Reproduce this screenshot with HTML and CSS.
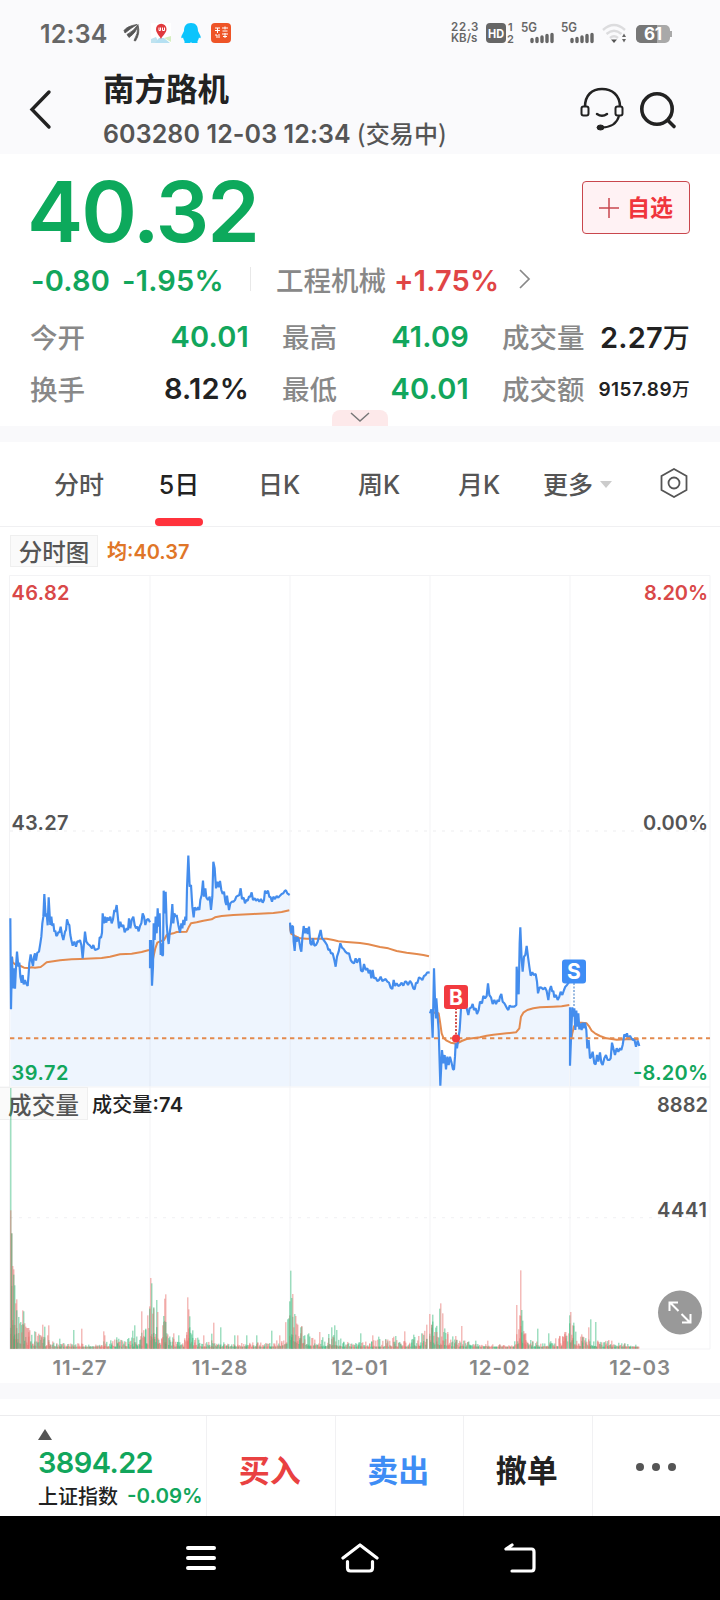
FILE: index.html
```html
<!DOCTYPE html>
<html lang="zh-CN">
<head>
    <meta charset="UTF-8">
    <meta name="viewport" content="width=device-width, initial-scale=1.0">
    <title>南方路机</title>
    <link rel="stylesheet" href="styles.css">
</head>
<body>
    <div class="status-bar">
        <span class="clock">12:34</span>
        <svg class="app-icons" width="110" height="22" viewBox="0 0 110 22">
            <path d="M1 8.500Q4 4 14 2.500Q8 6 2 11ZM4 12.500Q11 9 15 2.500Q14 10 6 15.500ZM11 18.500Q15 12 15 3.500Q17.500 11 12.500 19Z" fill="#555" stroke="#555" stroke-width=".8"/>
            <rect x="28" y="1" width="20" height="20" fill="#fff"/>
            <path d="M28 17l5-2 3 6h-8z" fill="#bfe3f0"/>
            <path d="M36 16h5l6 5h-15z" fill="#b5e0f2"/>
            <path d="M41 16l7-2v6z" fill="#d5eec0"/>
            <path d="M38 17C36 13 33 11 33 7a5 5 0 0 1 10.500 0c0 4-3.500 6-5.500 10z" fill="#e03a3e"/>
            <path d="M36 5.500v3h1.500v-3M39.500 5.500v3h2v-3" fill="none" stroke="#fff" stroke-width="1"/>
            <path d="M68 1c5 0 7 3 7 8l2.500 5c.500 2 0 3-1.500 1.500-.500 2-1 3-1.500 3.500v2h-5.500l-1-.700-1 .700h-5.500v-2c-.500-.500-1-1.500-1.500-3.500-1.500 1.500-2 .500-1.500-1.500L61 9c0-5 2-8 7-8z" fill="#0cc4fc"/>
            <rect x="88" y="1" width="20" height="20" rx="4" fill="#ee5427"/>
            <path d="M92 6h5M94.500 6v5M92 8.500h5M99 6h6M102 4.500v3M99.500 9h5M92 13h2v3M96 12v4M99 12h6M102 11v5M100 14.500h4" stroke="#fff" stroke-width="1" fill="none"/>
        </svg>
        <div class="status-right">
            <div class="net-speed"><span>22.3</span><span>KB/s</span></div>
            <svg width="226" height="24" viewBox="0 0 226 24">
                <rect x="0" y="2" width="20" height="20" rx="4" fill="#666"/>
                <text x="2" y="17" class="st-hd" textLength="16" lengthAdjust="spacingAndGlyphs">HD</text>
                <text x="22" y="10" class="st-sm">1</text>
                <text x="21" y="22" class="st-sm">2</text>
                <text x="35" y="11" class="st-5g" textLength="16" lengthAdjust="spacingAndGlyphs">5G</text>
                <path d="M46 17.500v2M51 16.500v3M56 15v4.500M61 13.500v6M66 12.500v7" class="bars" transform="translate(0 1)"/>
                <text x="75" y="11" class="st-5g" textLength="16" lengthAdjust="spacingAndGlyphs">5G</text>
                <path d="M86 17.500v2M91 16.500v3M96 15v4.500M101 13.500v6M106 12.500v7" class="bars" transform="translate(0 1)"/>
                <path d="M117 9Q128 -1 139 9M120.500 13Q128 6.500 135.500 13M124 17Q128 13.500 132 17" fill="none" stroke="#dcdcde" stroke-width="2.400"/>
                <path d="M125 18.500h6L128 22z" fill="#555"/>
                <path d="M136 16l2-3.500 2 3.500zM136 18l2 3.500 2-3.500z" fill="#666"/>
                <rect x="150" y="4" width="34" height="18" rx="5" fill="#a9a9a9"/>
                <path d="M155 4h16v18h-16a5 5 0 0 1-5-5v-8a5 5 0 0 1 5-5z" fill="#777"/>
                <rect x="184" y="10" width="2" height="6" fill="#a9a9a9"/>
                <text x="158" y="19" class="st-bat" textLength="18">61</text>
            </svg>
        </div>
    </div>

    <div class="header">
        <svg class="back" width="24" height="42" viewBox="0 0 24 42"><path d="M20 4L3 21.500L20 39" fill="none" stroke="#222" stroke-width="3.400" stroke-linecap="round"/></svg>
        <div class="stock">
            <div class="stock-name">南方路机</div>
            <div class="stock-sub">603280 12-03 12:34 <span class="cn">(交易中)</span></div>
        </div>
        <svg class="service" width="44" height="46" viewBox="0 0 44 46" fill="none" stroke="#222">
            <path d="M5 21C5 9 12 3 22 3s18 6 18 18" stroke-width="2.500"/>
            <rect x="1.500" y="20.500" width="7" height="9" rx="2" stroke-width="2"/>
            <rect x="35.500" y="20.500" width="7" height="9" rx="2" stroke-width="2"/>
            <path d="M17 28q5 3.500 10 0" stroke-width="2.500" stroke-linecap="round"/>
            <path d="M39 30q-3 11-17 11.500" stroke-width="2.200"/>
            <ellipse cx="20.500" cy="41.500" rx="3.500" ry="2.500" fill="#222"/>
        </svg>
        <svg class="search" width="38" height="40" viewBox="0 0 38 40" fill="none" stroke="#222" stroke-width="3.600">
            <circle cx="18" cy="19" r="15.200"/>
            <path d="M29 30.500l6 6" stroke-linecap="round"/>
        </svg>
    </div>

    <div class="quote">
        <div class="price-row">
            <div class="price">40.32</div>
            <div class="add-btn">
                <svg width="20" height="20" viewBox="0 0 20 20"><path d="M10 0v20M0 10h20" stroke="#c9474d" stroke-width="1.500"/></svg>
                自选
            </div>
        </div>
        <div class="change-row">
            <span class="chg green">-0.80</span>
            <span class="pct green">-1.95%</span>
            <i class="sep"></i>
            <span class="label">工程机械</span>
            <span class="sector red">+1.75%</span>
            <svg width="12" height="20" viewBox="0 0 12 20"><path d="M1 1l9 9-9 9" fill="none" stroke="#888" stroke-width="1.700"/></svg>
        </div>
        <div class="stats">
            <div class="stat"><span class="label">今开</span><span class="val green">40.01</span></div>
            <div class="stat"><span class="label">最高</span><span class="val green">41.09</span></div>
            <div class="stat"><span class="label">成交量</span><span class="val">2.27<b class="cn">万</b></span></div>
            <div class="stat"><span class="label">换手</span><span class="val">8.12%</span></div>
            <div class="stat"><span class="label">最低</span><span class="val green">40.01</span></div>
            <div class="stat"><span class="label">成交额</span><span class="val small">9157.89<b class="cn">万</b></span></div>
        </div>
        <div class="handle">
            <svg width="20" height="11" viewBox="0 0 20 11"><path d="M1 1l9 8 9-8" fill="none" stroke="#777" stroke-width="1.500"/></svg>
        </div>
    </div>

    <div class="tabs">
        <div class="tab">分时</div>
        <div class="tab active">5日</div>
        <div class="tab">日K</div>
        <div class="tab">周K</div>
        <div class="tab">月K</div>
        <div class="tab more">更多<i class="caret"></i></div>
        <svg class="hex" width="28" height="30" viewBox="0 0 28 30" fill="none" stroke="#555" stroke-width="1.800">
            <path d="M14 1L26.500 8v14L14 29 1.500 22V8z"/>
            <circle cx="14" cy="15" r="5.500"/>
        </svg>
    </div>

    <div class="legend">
        <span class="legend-box">分时图</span>
        <span class="avg">均:40.37</span>
    </div>

    <svg class="chart" width="720" height="776" viewBox="0 0 720 776">
        <path class="grid" d="M9.500 .500H710V774H9.500ZM0 512H710M150 0V774M290 0V774M430 0V774M570 0V774"/>
        <path class="grid dash" d="M10 256H710"/>
        <path class="grid dash" d="M10 642.700H710"/>

        <rect class="label-box" x="-1" y="512.500" width="88.500" height="32"/>
        <text class="c-name" x="8" y="538.500" textLength="71">成交量</text>
        <text class="c-vol" x="92" y="537" textLength="91"><tspan class="cn">成交量</tspan>:74</text>

        <g id="volume" transform="scale(.33333)"></g>

        <!-- price data is kept at 1/3 px resolution, one group per session -->
        <g transform="scale(.33333)">
            <g id="prices"></g>
            <path class="last" d="M30 1390H2130"/>
        </g>

        <g class="marks">
            <path d="M456 433V463" stroke="#c9302c" stroke-width="1.700" stroke-dasharray="2 1.500"/>
            <circle cx="456" cy="463.500" r="4" fill="#f23a3f"/>
            <rect x="444" y="410" width="24" height="24" rx="3" fill="#f23a3f"/>
            <text class="mark" x="456" y="429.500">B</text>
            <path d="M574 408V431" stroke="#8ab0dc" stroke-width="1.700" stroke-dasharray="2 1.500"/>
            <rect x="562" y="384.500" width="24" height="24" rx="3" fill="#3e8df5"/>
            <text class="mark" x="574" y="404">S</text>
        </g>

        <text class="axis red" x="11.500" y="24.500" textLength="58">46.82</text>
        <text class="axis red" x="644" y="24.500" textLength="64">8.20%</text>
        <text class="axis" x="11.500" y="254.500" textLength="57">43.27</text>
        <text class="axis" x="643" y="254.500" textLength="65">0.00%</text>
        <text class="axis green" x="11.500" y="504.500" textLength="57">39.72</text>
        <text class="axis green" x="633" y="504.500" textLength="75">-8.20%</text>
        <text class="axis" x="657" y="536.500" textLength="51">8882</text>
        <text class="axis" x="657" y="641.500" textLength="50">4441</text>

        <circle cx="680" cy="737.500" r="22" fill="#999"/>
        <path d="M678.500 736l-8-8M669.500 736v-8.500h8.500M681.500 739l8 8M690.500 739v8.500h-8.500" fill="none" stroke="#fff" stroke-width="2"/>
    </svg>

    <div class="dates">
        <span>11-27</span><span>11-28</span><span>12-01</span><span>12-02</span><span>12-03</span>
    </div>

    <div class="trade-bar">
        <div class="index">
            <i class="up"></i>
            <div class="index-val green">3894.22</div>
            <div class="index-sub"><span class="cn">上证指数</span><span class="green">-0.09%</span></div>
        </div>
        <div class="act buy">买入</div>
        <div class="act sell">卖出</div>
        <div class="act">撤单</div>
        <div class="act dots"><i></i><i></i><i></i></div>
    </div>

    <div class="nav-bar">
        <svg width="32" height="28" viewBox="0 0 32 28"><path d="M3 4h26M3 14h26M3 24h26" stroke="#fff" stroke-width="4" stroke-linecap="round"/></svg>
        <svg width="40" height="30" viewBox="0 0 40 30" fill="none" stroke="#fff" stroke-width="3.200" stroke-linecap="round" stroke-linejoin="round"><path d="M3 15L20 2 37 15M7.500 18.500v6.500q0 3 3 3h19q3 0 3-3v-6.500"/></svg>
        <svg width="34" height="30" viewBox="0 0 34 30" fill="none" stroke="#fff" stroke-width="3.200" stroke-linecap="round" stroke-linejoin="round"><path d="M9 2L3 6h25.500q2.500 0 2.500 3v16q0 3-2.500 3H9"/></svg>
    </div>

    <script>
        const NS = 'http://www.w3.org/2000/svg';

        const sessions = [
            {
                dx: 0,
                price: '31,355 33,628 36,470 39,565 43,505 45,566 48,500 51,455 55,500 58,488 61,530 65,548 68,525 71,553 75,540 79,552 83,558 86,520 88,490 92,463 96,485 99,498 102,470 105,460 108,482 112,458 117,455 121,430 124,410 127,370 130,350 133,282 137,350 140,340 143,376 146,292 149,345 151,375 154,350 157,378 160,370 163,395 166,392 169,408 172,405 175,396 178,398 182,380 186,405 190,420 195,395 198,390 201,358 205,372 208,375 211,405 214,420 218,437 223,425 228,440 232,424 237,425 240,420 244,435 248,475 252,430 255,395 259,425 264,432 270,437 276,445 280,435 285,450 291,448 296,445 299,412 303,413 306,398 308,340 312,370 315,350 319,368 322,352 326,362 331,350 335,370 339,358 343,330 346,335 350,315 354,355 357,385 361,365 365,380 370,375 374,397 380,385 384,390 387,355 391,385 395,360 400,350 404,375 408,385 412,380 416,394 420,378 424,370 428,340 432,350 436,375 440,360 445,357 450,367',
                avg: '36,470 38,487 45,493 55,495 62,498 72,503 85,504 95,502 105,503 122,501 130,495 140,487 150,485 180,481 215,478 240,477 305,474 330,470 360,463 395,461 425,456 447,450'
            },
            {
                dx: 0,
                price: '450,420 450,505 453,420 456,557 459,500 461,370 464,420 467,350 470,400 473,325 476,380 479,340 482,465 485,430 487,468 489,465 491,272 494,340 497,275 500,370 503,410 506,432 509,400 513,370 517,312 520,370 523,340 527,350 530,345 535,375 540,398 544,370 547,385 550,360 553,375 556,350 559,362 561,265 565,167 569,260 573,255 577,320 581,352 584,322 590,330 594,322 598,330 601,300 605,285 609,242 612,290 616,265 619,292 624,300 629,290 633,330 637,290 640,185 644,205 648,265 652,245 656,262 660,243 664,270 668,282 672,275 676,305 679,315 681,287 687,330 691,310 696,305 700,305 705,300 709,290 714,287 718,285 722,265 726,297 731,293 735,310 739,300 743,302 747,290 751,290 755,277 759,300 764,295 768,302 773,297 778,305 783,297 788,308 792,300 795,272 799,280 804,272 808,290 812,292 816,305 820,290 825,297 830,288 835,293 840,287 845,282 850,280 854,273 858,271 862,280 869,285',
                avg: '455,500 460,472 466,445 472,428 480,424 492,420 500,405 510,402 520,400 530,396 560,395 567,380 573,370 590,367 610,362 635,358 645,352 665,348 700,345 760,342 820,339 845,336 868,331'
            },
            {
                dx: 840,
                price: '30,368 33,400 36,378 39,380 41,425 44,453 47,410 50,425 53,412 57,420 61,445 64,455 67,415 71,378 75,400 79,385 83,402 87,380 91,430 95,435 99,415 103,437 108,435 113,425 118,405 122,390 126,415 131,420 136,427 141,435 145,450 149,448 153,460 158,460 163,480 167,500 171,470 176,455 181,430 186,443 191,447 196,455 202,460 207,460 212,480 217,487 222,490 227,475 231,488 235,480 239,475 243,512 248,515 252,492 257,510 262,505 266,520 270,510 274,535 278,510 282,535 287,533 292,543 297,540 302,530 307,543 312,540 317,537 322,545 327,548 332,563 337,567 341,540 345,558 350,550 355,558 360,555 365,548 370,557 375,545 379,545 384,555 390,543 395,550 400,565 404,568 408,548 412,550 417,532 422,535 427,540 432,528 437,525 441,518 449,517',
                avg: '30,370 31,390 34,402 45,408 60,415 80,416 140,416 160,420 175,424 200,426 240,429 265,433 300,441 325,445 350,453 380,458 410,462 430,465 447,469'
            },
            {
                dx: 840,
                price: '450,640 454,628 458,713 462,505 465,600 468,655 469,595 473,650 476,690 481,857 486,750 490,790 494,765 498,808 502,770 506,795 510,770 514,785 519,808 522,808 525,770 527,730 531,745 535,715 539,690 543,625 548,622 552,610 556,615 560,625 565,645 569,625 574,622 578,612 582,630 587,625 591,642 596,630 600,605 606,610 610,588 615,595 620,588 624,550 628,585 633,592 638,612 643,600 648,612 653,600 657,605 660,590 664,582 668,605 673,610 677,617 681,625 685,630 689,617 693,620 698,620 703,620 709,615 710,500 713,545 716,583 719,430 721,382 725,480 728,515 732,470 736,465 740,438 744,470 748,500 752,527 757,517 761,525 767,522 771,545 774,580 779,562 784,563 790,568 795,562 800,573 805,600 809,570 813,558 817,575 820,573 823,592 828,585 833,600 838,590 842,575 847,585 852,570 856,560 861,555 868,545',
                avg: '455,640 470,637 476,640 480,665 485,700 490,713 500,722 512,728 530,731 545,723 560,717 600,712 620,707 640,704 680,700 708,697 718,685 723,650 730,638 742,630 760,625 780,622 820,620 845,619 868,615'
            },
            {
                dx: 1470,
                price: '240,622 240,797 244,690 247,622 250,650 253,625 256,690 259,632 262,680 265,640 268,688 272,670 275,690 278,668 281,685 285,668 289,690 292,745 296,720 300,775 304,770 308,755 313,790 317,793 321,765 325,785 330,757 334,788 338,795 343,775 348,765 353,780 358,780 362,775 366,728 370,745 375,765 380,745 385,755 390,745 394,750 398,735 403,703 407,710 411,700 415,718 420,707 424,715 429,720 433,718 438,740 443,722 448,738',
                avg: '243,720 247,700 252,680 260,668 275,668 290,670 298,680 305,692 315,700 330,708 350,715 380,719 410,718 446,718'
            }
        ];

        // x, height, colour
        const peaks = [
            [31,782,'g'],[31,415,'r'],[34,346,'r'],[34,346,'g'],[37,248,'r'],[40,238,'r'],[40,222,'g'],[43,190,'g'],[45,136,'r'],[50,148,'r'],[48,115,'g'],[55,95,'g'],[66,115,'r'],[69,112,'g'],[80,62,'r'],[84,62,'r'],[103,52,'g'],[122,40,'r'],[128,72,'r'],[133,66,'g'],[145,70,'r'],[179,30,'g'],[220,56,'g'],[244,60,'r'],[309,52,'r'],[313,40,'r'],[350,34,'g'],[397,54,'g'],[404,70,'g'],[425,112,'r'],[436,60,'g'],[441,100,'r'],
            [448,120,'g'],[452,212,'r'],[454,196,'g'],[458,105,'r'],[461,124,'g'],[469,146,'g'],[472,110,'r'],[492,150,'r'],[497,163,'r'],[490,98,'g'],[497,80,'g'],[520,46,'r'],[534,40,'g'],[561,154,'r'],[565,118,'r'],[568,97,'g'],[577,55,'g'],[609,40,'r'],[633,45,'g'],[640,78,'r'],[661,64,'g'],[704,40,'g'],[711,40,'r'],[740,40,'g'],[769,40,'g'],[815,54,'g'],[838,40,'r'],[862,88,'g'],
            [868,142,'g'],[871,234,'g'],[878,164,'r'],[875,152,'g'],[884,104,'g'],[887,98,'r'],[893,72,'r'],[900,64,'g'],[905,68,'r'],[925,46,'g'],[958,50,'r'],[985,44,'g'],[994,64,'g'],[1002,70,'g'],[1008,56,'g'],[1082,46,'g'],[1116,40,'r'],[1135,36,'g'],[1180,36,'r'],[1186,38,'g'],[1214,52,'r'],[1240,42,'g'],[1255,38,'r'],[1280,72,'r'],
            [1287,104,'r'],[1293,72,'r'],[1298,102,'g'],[1308,50,'r'],[1319,120,'g'],[1322,136,'r'],[1326,106,'r'],[1341,50,'r'],[1366,38,'r'],[1383,68,'r'],[1426,24,'g'],[1462,24,'r'],[1498,14,'r'],[1550,131,'r'],[1557,100,'r'],[1561,235,'r'],[1563,116,'g'],[1566,84,'g'],[1572,46,'r'],[1577,46,'r'],[1613,60,'g'],[1645,46,'g'],[1687,38,'r'],[1696,50,'r'],
            [1708,100,'g'],[1711,110,'r'],[1718,70,'r'],[1720,78,'g'],[1741,36,'r'],[1748,34,'g'],[1765,64,'r'],[1771,88,'g'],[1786,80,'g'],[1826,26,'r'],[1835,24,'r'],[1873,16,'g'],[1906,12,'g']
        ];

        // typical bar height along the axis
        const level = [[30,230],[42,130],[60,70],[100,42],[145,32],[165,18],[215,14],[280,11],[320,22],[380,26],[415,32],[442,60],[448,120],[462,100],[478,50],[492,85],[505,42],[530,20],[552,14],[563,95],[575,42],[600,20],[650,22],[700,14],[790,16],[845,34],[866,85],[876,115],[900,56],[940,28],[1000,34],[1050,14],[1090,20],[1160,26],[1230,24],[1270,42],[1290,75],[1318,50],[1330,60],[1350,32],[1390,24],[1420,12],[1540,9],[1550,40],[1563,100],[1575,42],[1600,20],[1640,14],[1690,36],[1710,80],[1730,38],[1765,34],[1800,20],[1850,16],[1918,9]];

        function add(parent, tag, attrs) {
            const el = document.createElementNS(NS, tag);
            for (const k in attrs) el.setAttribute(k, attrs[k]);
            parent.appendChild(el);
        }

        function drawPrices() {
            const root = document.getElementById('prices');
            sessions.forEach(s => {
                const g = document.createElementNS(NS, 'g');
                g.setAttribute('transform', `translate(${s.dx} 675)`);
                const pts = s.price.split(' ');
                const x0 = pts[0].split(',')[0];
                const x1 = pts[pts.length - 1].split(',')[0];
                add(g, 'polygon', { class: 'area', points: `${x0},859 ${s.price} ${x1},859` });
                add(g, 'polyline', { class: 'avg-line', points: s.avg });
                add(g, 'polyline', { class: 'price-line', points: s.price });
                root.appendChild(g);
            });
        }

        function levelAt(x) {
            for (let i = 1; i < level.length; i++) {
                if (x <= level[i][0]) {
                    const [ax, ah] = level[i - 1];
                    const [bx, bh] = level[i];
                    return ah + (bh - ah) * (x - ax) / (bx - ax);
                }
            }
            return 5;
        }

        function drawVolume() {
            const root = document.getElementById('volume');
            const bar = (x, h, c, w) => add(root, 'rect', { class: 'v' + c, x: Math.floor(x / 3) * 3, y: 2321 - h, width: w, height: h });
            let seed = 11;
            const rnd = () => (seed = (seed * 16807) % 2147483647) / 2147483647;
            for (let x = 31; x < 1917; x += 1.74) {
                if ([444, 864, 1284, 1704].some(gap => Math.abs(x - gap) < 2)) continue;
                const r = rnd();
                bar(x, Math.max(6, levelAt(x) * (0.2 + r * r * 1.05)), rnd() > 0.42 ? 'r' : 'g', 4.5);
            }
            peaks.forEach(([x, h, c]) => bar(x, h, c, 4.5));
        }

        drawPrices();
        drawVolume();
    </script>
</body>
</html>
```
FILE: styles.css
```css
* {
    box-sizing: border-box;
}
body {
    margin: 0;
    width: 720px;
    height: 1600px;
    overflow: hidden;
    background: #fff;
    color: #222;
    font-family: Inter, "Noto Sans CJK SC", sans-serif;
    font-weight: 500;
}
i, b {
    font-style: normal;
    font-weight: inherit;
}
.cn {
    font-family: "Noto Sans CJK SC", sans-serif;
    font-weight: 500;
}
.green {
    color: #12a65c;
    fill: #12a65c;
}
.red {
    color: #e04545;
    fill: #e04545;
}

.status-bar {
    height: 66px;
    padding: 0 8px 0 40px;
    background: #fafafc;
    display: flex;
    align-items: center;
}
.clock {
    width: 83px;
    font-size: 25px;
    font-weight: 600;
    letter-spacing: 0.2px;
    color: #666;
    padding-top: 2px;
}
.status-right {
    margin-left: auto;
    display: flex;
    align-items: center;
}
.net-speed {
    width: 35px;
    display: flex;
    flex-direction: column;
    font-size: 11.5px;
    line-height: 11px;
    font-weight: 600;
    color: #666;
    white-space: nowrap;
}
.net-speed span:first-child {
    letter-spacing: 0.8px;
}
.status-bar text {
    fill: #666;
    font-weight: 600;
}
.status-bar .st-hd {
    font-size: 12px;
    font-weight: 700;
    fill: #fff;
}
.st-sm {
    font-size: 11px;
}
.st-5g {
    font-size: 12.5px;
}
.status-bar .st-bat {
    font-size: 17px;
    font-weight: 700;
    fill: #fff;
}
.bars {
    stroke: #666;
    stroke-width: 3.4;
    stroke-linecap: round;
    fill: none;
}

.header {
    height: 88px;
    padding: 0 43px 0 29px;
    background: #fafafc;
    display: flex;
}
.back {
    margin-top: 22px;
}
.stock {
    margin-left: 50px;
    flex: 1;
    padding-top: 1px;
}
.stock-name {
    font-size: 31.5px;
    line-height: 46px;
    font-weight: 700;
}
.stock-sub {
    font-size: 25px;
    line-height: 39px;
    font-weight: 600;
    letter-spacing: 0.1px;
    color: #555;
    white-space: pre;
}
.stock-sub .cn {
    font-size: 24px;
}
.service {
    margin-top: 20px;
}
.search {
    margin: 24px 0 0 15px;
}

.quote {
    height: 272px;
    padding: 0 30px;
    display: flex;
    flex-direction: column;
}
.price-row {
    height: 100px;
    display: flex;
    justify-content: space-between;
}
.price {
    margin-left: -3px;
    font-size: 84.5px;
    line-height: 115px;
    font-weight: 600;
    letter-spacing: -2px;
    color: #0da95c;
}
.add-btn {
    margin-top: 27px;
    width: 108px;
    height: 53px;
    padding-top: 1px;
    border: 1px solid #c9474d;
    border-radius: 4px;
    background: #fff2f4;
    color: #f0353c;
    font-size: 23px;
    line-height: 30px;
    font-weight: 700;
    display: flex;
    align-items: center;
    justify-content: center;
    gap: 8px;
}
.change-row {
    height: 54px;
    padding-top: 1px;
    display: flex;
    align-items: center;
    font-size: 29px;
}
.change-row span {
    white-space: nowrap;
}
.change-row .label {
    padding-bottom: 2px;
    margin-left: -1px;
}
.change-row svg {
    margin-bottom: 3px;
}
.chg {
    width: 92px;
    padding-left: 1px;
}
.pct {
    width: 128px;
}
.chg, .pct, .sector, .val {
    font-weight: 600;
    letter-spacing: 0.2px;
}
.sep {
    width: 1px;
    height: 24px;
    margin: 0 26px 3px 0;
    background: #e8e8e8;
}
.label {
    font-size: 27.5px;
    color: #888;
}
.sector {
    width: 125px;
    margin-left: 8px;
}
.stats {
    display: grid;
    grid-template-columns: 219px 187px 188px;
    grid-auto-rows: 52px;
    column-gap: 33px;
    margin: 5px -2px 0 0;
}
.stat {
    display: flex;
    align-items: center;
    justify-content: space-between;
    white-space: nowrap;
}
.stat .label {
    padding-bottom: 1px;
}
.val {
    font-size: 29px;
}
.val.small {
    font-size: 19px;
    letter-spacing: 0.4px;
}
.val .cn {
    font-size: 0.93em;
}
.handle {
    width: 56px;
    height: 16px;
    flex: none;
    margin: -4px 0 0 302px;
    border-radius: 8px 8px 0 0;
    background: #fde9ea;
    display: flex;
    justify-content: center;
    padding-top: 2px;
}

.tabs {
    height: 101px;
    padding-left: 29px;
    border-top: 16px solid #f9f9fb;
    border-bottom: 1px solid #f0f0f2;
    display: flex;
}
.tab {
    width: 100px;
    display: flex;
    flex-direction: column;
    align-items: center;
    font-size: 25px;
    line-height: 87px;
    color: #555;
}
.tab.active {
    color: #222;
}
.tab.active::after {
    content: "";
    width: 48px;
    height: 8px;
    margin-top: -11px;
    border-radius: 4px;
    background: #ff323c;
}
.tab.more {
    width: 118px;
    padding-left: 14px;
    flex-direction: row;
    align-items: flex-start;
}
.caret {
    margin: 39px 0 0 7px;
    border: 6px solid transparent;
    border-top: 7px solid #ccc;
    border-bottom: 0;
}
.hex {
    margin: 26px 0 0 13px;
}

.legend {
    height: 48px;
    padding: 8px 10px;
    display: flex;
    align-items: flex-start;
    gap: 9px;
}
.legend-box {
    width: 88px;
    height: 32px;
    border: 1px solid #efefef;
    background: #fafafa;
    font-size: 23.5px;
    line-height: 34px;
    text-align: center;
    color: #555;
}
.avg {
    font-size: 20px;
    line-height: 34px;
    font-weight: 600;
    color: #e07628;
}

.chart {
    display: block;
}
.grid {
    fill: none;
    stroke: #f3f3f5;
    stroke-width: 1;
}
.dash {
    stroke-width: 1.3;
    stroke-dasharray: 3 6;
}
.area {
    fill: #3e8df5;
    fill-opacity: 0.09;
}
.price-line {
    fill: none;
    stroke: #448ded;
    stroke-width: 6.5;
    stroke-linejoin: bevel;
}
.avg-line {
    fill: none;
    stroke: #e38a4e;
    stroke-width: 6;
    stroke-linejoin: round;
}
.last {
    stroke: #e38a4e;
    stroke-width: 6;
    stroke-dasharray: 13 11;
}
.vr {
    fill: #e8716d;
    fill-opacity: 0.48;
}
.vg {
    fill: #2bb673;
    fill-opacity: 0.45;
}
.label-box {
    fill: #fafafa;
    stroke: #efefef;
}
.c-name {
    font-size: 23.5px;
    fill: #555;
}
.c-vol {
    font-size: 20px;
    font-weight: 600;
    fill: #222;
}
.axis {
    font-size: 20px;
    font-weight: 600;
    fill: #555;
}
.axis.red {
    fill: #d94848;
}
.axis.green {
    fill: #12a65c;
}
.mark {
    font-size: 21px;
    font-weight: 700;
    text-anchor: middle;
    fill: #fff;
}

.dates {
    height: 32px;
    padding-left: 10px;
    display: flex;
    font-size: 20.5px;
    line-height: 33px;
    font-weight: 600;
    letter-spacing: 0.8px;
    color: #888;
}
.dates span {
    width: 140px;
    text-align: center;
}

.trade-bar {
    height: 133px;
    border-top: 16px solid #f9f9fb;
    padding-top: 17px;
    display: flex;
    background: linear-gradient(#ececee, #ececee) 0 16px / 100% 1px no-repeat;
}
.index {
    width: 206px;
    padding: 13px 0 0 38px;
}
.up {
    display: block;
    width: 14px;
    border: 7px solid transparent;
    border-bottom: 11px solid #555;
    border-top: 0;
}
.index-val {
    font-size: 29px;
    line-height: 36px;
    margin-top: 5px;
    font-weight: 600;
    letter-spacing: -0.6px;
}
.index-sub {
    display: flex;
    gap: 9px;
    font-size: 20.5px;
    line-height: 30px;
    font-weight: 600;
    white-space: nowrap;
}
.index-sub .cn {
    font-size: 20px;
}
.act {
    width: 128.5px;
    border-left: 1px solid #f1f1f3;
    display: flex;
    align-items: center;
    justify-content: center;
    padding: 4px 2px 0 0;
    font-size: 31px;
    font-weight: 700;
}
.buy {
    color: #e94141;
}
.sell {
    color: #3e8df5;
}
.dots {
    gap: 8px;
    padding: 2px 0 0;
}
.dots i {
    width: 8px;
    height: 8px;
    border-radius: 50%;
    background: #555;
}

.nav-bar {
    height: 84px;
    padding-left: 1px;
    background: #000;
    display: flex;
    align-items: center;
    justify-content: center;
    gap: 123px;
}
```
